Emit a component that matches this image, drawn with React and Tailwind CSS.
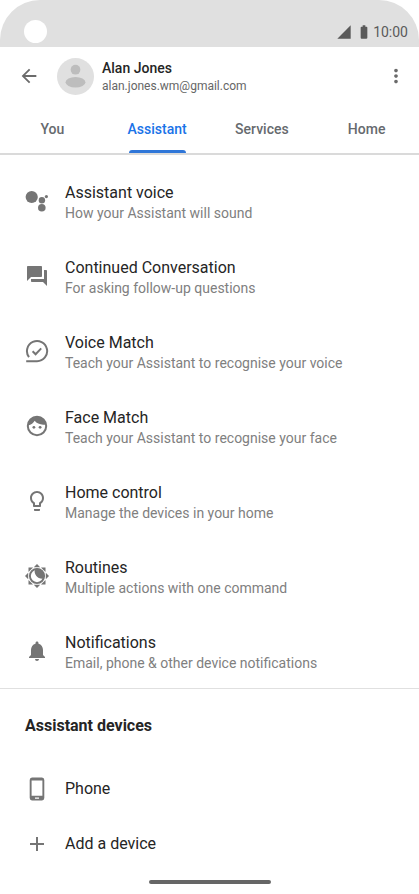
import React from "react";
import {
  MdAdd,
  MdArrowBack,
  MdBatteryFull,
  MdForum,
  MdLightbulbOutline,
  MdMoreVert,
  MdNotifications,
  MdSignalCellular4Bar,
} from "react-icons/md";

const AssistantIcon = () => (
  <svg viewBox="0 0 24 24" className="size-6" fill="currentColor">
    <circle cx="6.7" cy="8" r="6.1" />
    <circle cx="16.9" cy="11.3" r="3.2" />
    <circle cx="21.4" cy="7.6" r="1.6" />
    <circle cx="16.8" cy="18.8" r="3.8" />
  </svg>
);

const VoiceMatchIcon = () => (
  <svg viewBox="0 0 24 24" className="size-6" fill="none" stroke="currentColor" strokeWidth="2">
    <path d="M4 18.2A10.1 10.1 0 1 1 12 22.2H1.2" />
    <path d="M7.6 12.2l3 3 5.6-5.8" />
  </svg>
);

const FaceIcon = () => (
  <svg viewBox="0 0 24 24" className="size-6" fill="currentColor">
    <circle cx="12" cy="12" r="9.2" fill="none" stroke="currentColor" strokeWidth="2" />
    <path d="M3 11.4C6.3 10.6 8.4 9.2 9.7 6.8C12 9.9 16 11.2 21 10.4C20.4 5.8 16.6 2.4 12 2.4S3.2 6.4 3 11.4z" />
    <circle cx="8.9" cy="13.3" r="1.4" />
    <circle cx="15.1" cy="13.3" r="1.4" />
  </svg>
);

const RoutinesIcon = () => (
  <svg viewBox="0 0 24 24" className="size-6" fill="currentColor">
    {[0, 45, 90, 135, 180, 225, 270, 315].map((angle) => (
      <path key={angle} d="M12 0l3.2 3.2H8.8z" transform={`rotate(${angle} 12 12)`} />
    ))}
    <circle cx="12" cy="12" r="7.1" fill="none" stroke="currentColor" strokeWidth="1.9" />
    <path d="M9.8 5C8.6 10.4 12.6 15.4 18.9 14.6A7.4 7.4 0 0 0 9.8 5z" />
  </svg>
);

const PhoneIcon = () => (
  <svg viewBox="0 0 24 24" className="size-6" fill="currentColor">
    <path
      fillRule="evenodd"
      d="M7 .5h10A2.5 2.5 0 0 1 19.3 3v18a2.5 2.5 0 0 1-2.3 2.5H7A2.5 2.5 0 0 1 4.7 21V3A2.5 2.5 0 0 1 7 .5zM6.6 3.6v15.2h10.8V3.6zM10 20.4v1.4h4v-1.4z"
    />
  </svg>
);

const settings = [
  { title: "Assistant voice", text: "How your Assistant will sound", icon: <AssistantIcon /> },
  { title: "Continued Conversation", text: "For asking follow-up questions", icon: <MdForum /> },
  { title: "Voice Match", text: "Teach your Assistant to recognise your voice", icon: <VoiceMatchIcon /> },
  { title: "Face Match", text: "Teach your Assistant to recognise your face", icon: <FaceIcon /> },
  { title: "Home control", text: "Manage the devices in your home", icon: <MdLightbulbOutline /> },
  { title: "Routines", text: "Multiple actions with one command", icon: <RoutinesIcon /> },
  { title: "Notifications", text: "Email, phone & other device notifications", icon: <MdNotifications /> },
];

const devices = [
  { title: "Phone", icon: <PhoneIcon /> },
  { title: "Add a device", icon: <MdAdd /> },
];

const App = () => {
  return (
    <div className="min-h-screen bg-white font-['Roboto',sans-serif] text-[#252525]">
      {/* Status bar */}
      <div className="flex h-[47px] items-end justify-between rounded-t-[40px] bg-[#e0e0e0] pl-6 pr-[11px] pb-1">
        <div className="size-[23px] rounded-full bg-white" />
        <div className="flex items-center pb-px text-[#5a5a5a]">
          <MdSignalCellular4Bar className="mr-1 size-4" />
          <MdBatteryFull className="size-4" />
          <span className="ml-px text-sm leading-5">10:00</span>
        </div>
      </div>

      {/* Account header */}
      <header className="flex items-center pt-[10px] pl-[18px] pr-3">
        <button aria-label="Back" className="text-[#6b6b6b]">
          <MdArrowBack className="size-[22px]" />
        </button>
        <svg viewBox="0 0 38 38" className="ml-[17px] size-[37px]">
          <circle cx="19" cy="19" r="19" fill="#e0e0e0" />
          <circle cx="19" cy="12" r="5" fill="#bdbdbd" />
          <ellipse cx="19" cy="25" rx="10.2" ry="5.4" fill="#bdbdbd" />
        </svg>
        <div className="ml-2 flex-1 pt-[2px]">
          <h1 className="text-sm leading-[18px] font-medium">Alan Jones</h1>
          <p className="text-xs leading-[18px] text-[#666666]">alan.jones.wm@gmail.com</p>
        </div>
        <button aria-label="More options" className="text-[#6b6b6b]">
          <MdMoreVert className="size-[22px]" />
        </button>
      </header>

      {/* Tabs */}
      <nav className="mt-[9px] grid grid-cols-4 border-b-2 border-[#dadada] text-center text-sm font-medium text-[#666a6e]">
        {["You", "Assistant", "Services", "Home"].map((tab) => (
          <button key={tab} className={tab === "Assistant" ? "flex flex-col items-center text-[#1a73e8]" : "flex flex-col items-center"}>
            <span className="pt-[15px] pb-[11px] leading-5">{tab}</span>
            {tab === "Assistant" && <span className="h-[3px] w-[57px] rounded-t bg-[#2f76d8]" />}
          </button>
        ))}
      </nav>

      <main>
        <ul className="flex flex-col gap-[33px] border-b border-[#e0e0e0] pt-[27px] pb-[14px]">
          {settings.map((item) => (
            <li key={item.title}>
              <button className="flex w-full items-start pl-[25px] text-left">
                <span className="pt-[7px] text-2xl text-[#757575]">{item.icon}</span>
                <span className="ml-4">
                  <span className="block text-base leading-[21px]">{item.title}</span>
                  <span className="block text-sm leading-[21px] text-[#808080]">{item.text}</span>
                </span>
              </button>
            </li>
          ))}
        </ul>

        <h2 className="pt-[26px] pl-[25px] text-base leading-[22px] font-bold">Assistant devices</h2>
        <ul className="pt-6">
          {devices.map((item) => (
            <li key={item.title}>
              <button className="flex h-[55px] w-full items-center pl-[25px] text-left">
                <span className="text-2xl text-[#757575]">{item.icon}</span>
                <span className="ml-4 text-base leading-[21px]">{item.title}</span>
              </button>
            </li>
          ))}
        </ul>
      </main>

      <div className="mx-auto mt-[9px] h-1 w-[122px] rounded-full bg-[#666666]" />
    </div>
  );
};

export default App;
